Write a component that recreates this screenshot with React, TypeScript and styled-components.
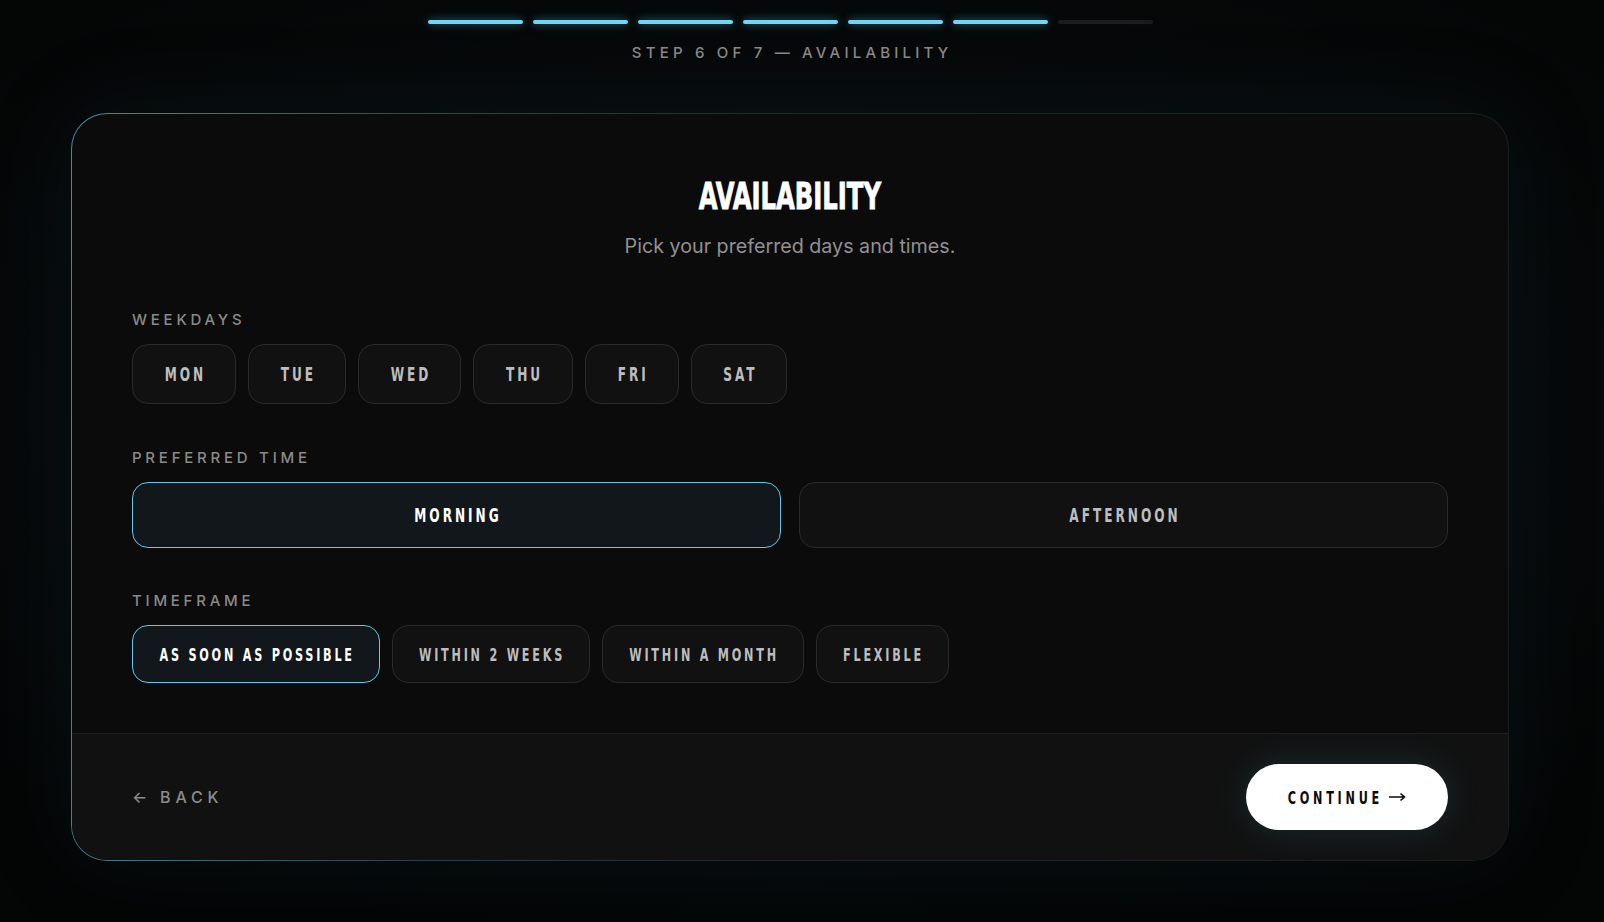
import styled, { createGlobalStyle, css } from "styled-components";

const GlobalStyle = createGlobalStyle`
  * { box-sizing: border-box; }
  html, body {
    margin: 0;
    background: #050607;
  }
  body {
    font-family: Inter, "Noto Sans", sans-serif;
    color: #fff;
  }
`;

// tall, narrow caps used on every chip and button
const condensed = css`
  font-family: "DejaVu Sans Condensed", "DejaVu Sans", sans-serif;
  font-stretch: condensed;
  font-weight: 700;
`;

const Page = styled.div`
  min-height: 922px;
  padding: 20px 95px 40px 71px;
  display: flex;
  flex-direction: column;
  background: radial-gradient(ellipse 70% 60% at 50% 45%, #0a0f11 0%, #070a0b 55%, #040505 100%);
`;

const Stepper = styled.div`
  display: flex;
  justify-content: center;
  gap: 10px;
`;

const Bar = styled.div<{ $done: boolean }>`
  width: 95px;
  height: 4px;
  border-radius: 2px;
  background: ${p => (p.$done ? "#6fd6f7" : "#1c1c1c")};
  box-shadow: ${p => (p.$done ? "0 0 8px rgba(111,214,247,.45), 0 0 22px rgba(111,214,247,.12)" : "none")};
`;

const StepText = styled.div`
  margin-top: 19px;
  text-align: center;
  font-size: 15px;
  font-weight: 500;
  line-height: 20px;
  letter-spacing: 0.28em;
  color: #8a8a8a;
  span { margin-right: -0.28em; }
`;

const Card = styled.div`
  margin-top: 50px;
  border-radius: 36px;
  border: 1px solid transparent;
  background:
    linear-gradient(#0b0b0b, #0b0b0b) padding-box,
    linear-gradient(95deg, #4f8a9a 0%, #2c4c55 22%, #1f2426 50%, #1c1c1c 100%) border-box;
  box-shadow: 0 0 90px rgba(20, 60, 70, 0.18);
  overflow: hidden;
`;

const CardBody = styled.div`
  padding: 61px 60px 50px;
`;

const Title = styled.h1`
  ${condensed};
  margin: 0;
  text-align: center;
  font-size: 37px;
  line-height: 44px;
  span {
    display: inline-block;
    transform: scaleX(0.73);
    -webkit-text-stroke: 0.8px #fff;
  }
`;

const Subtitle = styled.p`
  margin: 14px 0 0;
  text-align: center;
  font-size: 19.7px;
  line-height: 26px;
  color: #919191;
`;

const Sections = styled.div`
  margin-top: 51px;
  display: flex;
  flex-direction: column;
  gap: 43.5px;
`;

const Label = styled.div`
  font-size: 15px;
  font-weight: 500;
  line-height: 20px;
  letter-spacing: 0.25em;
  color: #8a8a8a;
  margin-bottom: 14px;
`;

const ChipRow = styled.div`
  display: flex;
  flex-wrap: wrap;
  gap: 12px;
`;

const chipBase = css<{ $active?: boolean }>`
  ${condensed};
  display: flex;
  align-items: center;
  justify-content: center;
  border-radius: 16px;
  border: 1px solid ${p => (p.$active ? "#62c9ea" : "#2a2a2a")};
  background: ${p => (p.$active ? "#11171a" : "#111111")};
  color: ${p => (p.$active ? "#ffffff" : "#bdbdbd")};
  letter-spacing: 0.22em;
  cursor: pointer;
`;

const ChipText = styled.span`
  display: inline-block;
  transform: scaleY(1.38);
  margin-right: -0.22em;
`;

const DayChip = styled.button`
  ${chipBase};
  height: 60px;
  padding: 0 31.75px;
  font-size: 13.5px;
`;

const TimeGrid = styled.div`
  display: grid;
  grid-template-columns: 1fr 1fr;
  gap: 18px;
`;

const TimeOption = styled.button`
  ${chipBase};
  height: 66px;
  font-size: 13.5px;
`;

const FrameChip = styled.button`
  ${chipBase};
  height: 58px;
  padding: 0 26.5px;
  font-size: 12.5px;
`;

const Footer = styled.div`
  display: flex;
  align-items: center;
  justify-content: space-between;
  padding: 30px 60px;
  background: #111111;
  border-top: 1px solid #1d1d1d;
`;

const BackButton = styled.button`
  display: flex;
  align-items: center;
  gap: 8px;
  padding: 0;
  border: none;
  background: none;
  font-family: Inter, sans-serif;
  font-size: 16px;
  font-weight: 500;
  letter-spacing: 0.3em;
  color: #8c8c8c;
  cursor: pointer;
`;

const ContinueButton = styled.button`
  ${condensed};
  display: flex;
  align-items: center;
  gap: 6px;
  height: 66px;
  padding: 0 42px;
  border: none;
  border-radius: 999px;
  background: #ffffff;
  color: #0b0b0b;
  font-size: 12.5px;
  letter-spacing: 0.3em;
  box-shadow: 0 0 36px rgba(100, 200, 230, 0.14);
  cursor: pointer;
  span {
    display: inline-block;
    transform: scaleY(1.38);
  }
`;

const ArrowRight = () => (
  <svg width="17" height="10" viewBox="0 0 17 10" fill="none">
    <path d="M0 5h15.5M11.5 1.5 15.5 5l-4 3.5" stroke="#0b0b0b" strokeWidth="1.6" />
  </svg>
);

const days = ["MON", "TUE", "WED", "THU", "FRI", "SAT"];
const times = ["MORNING", "AFTERNOON"];
const frames = ["AS SOON AS POSSIBLE", "WITHIN 2 WEEKS", "WITHIN A MONTH", "FLEXIBLE"];

export default function App() {
  const step = 6;
  const total = 7;
  return (
    <Page>
      <GlobalStyle />
      <Stepper>
        {Array.from({ length: total }).map((_, i) => (
          <Bar key={i} $done={i < step} />
        ))}
      </Stepper>
      <StepText>
        <span>STEP {step} OF {total} — AVAILABILITY</span>
      </StepText>

      <Card>
        <CardBody>
          <Title>
            <span>AVAILABILITY</span>
          </Title>
          <Subtitle>Pick your preferred days and times.</Subtitle>

          <Sections>
            <div>
              <Label>WEEKDAYS</Label>
              <ChipRow>
                {days.map(d => (
                  <DayChip key={d}>
                    <ChipText>{d}</ChipText>
                  </DayChip>
                ))}
              </ChipRow>
            </div>

            <div>
              <Label>PREFERRED TIME</Label>
              <TimeGrid>
                {times.map(t => (
                  <TimeOption key={t} $active={t === "MORNING"}>
                    <ChipText>{t}</ChipText>
                  </TimeOption>
                ))}
              </TimeGrid>
            </div>

            <div>
              <Label>TIMEFRAME</Label>
              <ChipRow>
                {frames.map(f => (
                  <FrameChip key={f} $active={f === "AS SOON AS POSSIBLE"}>
                    <ChipText>{f}</ChipText>
                  </FrameChip>
                ))}
              </ChipRow>
            </div>
          </Sections>
        </CardBody>

        <Footer>
          <BackButton>
            <span>←</span>
            <span>BACK</span>
          </BackButton>
          <ContinueButton>
            <span>CONTINUE</span>
            <ArrowRight />
          </ContinueButton>
        </Footer>
      </Card>
    </Page>
  );
}
